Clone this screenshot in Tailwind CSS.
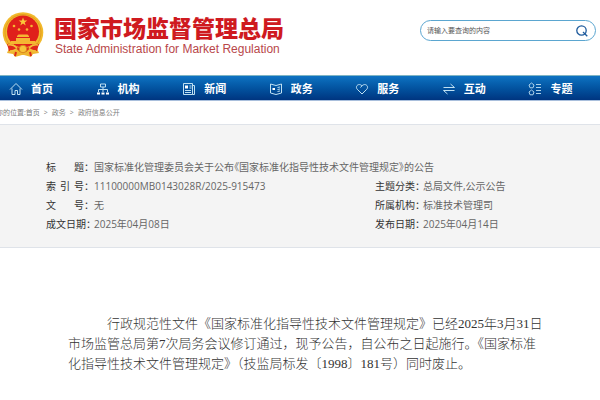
<!doctype html>
<html lang="zh-CN">
<head>
  <meta charset="UTF-8">
  <meta name="viewport" content="width=device-width, initial-scale=1.0">
  <title>国家市场监督管理总局</title>
  <script src="https://cdn.jsdelivr.net/npm/@tailwindcss/browser@4"></script>
</head>
<body class="bg-white overflow-x-hidden font-['Open_Sans','Noto_Sans_CJK_SC',sans-serif]">

<header class="flex items-start justify-between h-[75px] pl-0.5 pr-1">
    <a href="#" class="flex items-start pt-3 gap-2.5">
        <svg class="w-[42px] h-[46px] shrink-0" viewBox="0 0 42 46">
            <path d="M8 34L5 41l6 1 2 3 7-2h2l7 2 2-3 6-1-3-7z" fill="#eeb530"/>
            <circle cx="21" cy="20.500" r="20.300" fill="#f2b92b"/>
            <circle cx="21" cy="20.500" r="18" fill="none" stroke="#e29d22"/>
            <circle cx="21" cy="19.500" r="16" fill="#e0201b"/>
            <path d="M21 5.500l1.100 3h3.200l-2.600 1.900 1 3.100-2.700-1.900-2.700 1.900 1-3.100-2.600-1.900h3.200z" fill="#fbc83a"/>
            <g fill="#f5b632">
                <circle cx="12" cy="14" r="1.300"/><circle cx="29.500" cy="14" r="1.300"/>
                <circle cx="17" cy="17.500" r="1.300"/><circle cx="25" cy="17.500" r="1.300"/>
                <path d="M15 24l1.500-1.500h9L27 24v1H15zM14 26h14v3H14zM9 29h24v3H9z"/>
            </g>
            <path d="M5 32q5-1 10 3l3 1q3-3 6 0l3-1q5-4 10-3l-2 7q-5 0-8-2l-3 3h-6l-3-3q-3 2-8 2z" fill="#e0281b"/>
            <path d="M6 33q5-1 9 3M36 33q-5-1-9 3M8 39q5 0 7-3M34 39q-5 0-7-3" fill="none" stroke="#f3c03a" stroke-width="1.500"/>
            <circle cx="21" cy="37" r="3.800" fill="#f8c43c" stroke="#d9861c"/>
            <path d="M14 40l-1 4M28 40l1 4" stroke="#dc2a1c" stroke-width="2"/>
        </svg>
        <div class="pt-0.5">
            <h1 class="text-[23px] leading-[29px] font-black text-[#cf1a1f] whitespace-nowrap">国家市场监督管理总局</h1>
            <p class="pl-px text-[12px] leading-3 text-[#b8474a] whitespace-nowrap font-['Liberation_Sans',sans-serif]">State Administration for Market Regulation</p>
        </div>
    </a>
    <form class="flex items-center w-[176px] h-[21px] mt-5 pl-1.5 pr-[7px] rounded-full border border-[#5ba6d0]">
        <input type="text" aria-label="搜索" placeholder="请输入要查询的内容" class="flex-1 min-w-0 text-[7px] leading-4 outline-none placeholder:text-[#555]">
        <button type="submit" aria-label="搜索">
            <svg class="size-3" viewBox="0 0 12 12" fill="none" stroke="#1d5a9c" stroke-width="1.300">
                <circle cx="5.500" cy="5.500" r="4.700"/><path d="M7 7l4.300 4.300"/>
            </svg>
        </button>
    </form>
</header>

<nav class="h-[26px] border-y border-t-[#7fb5c4] border-b-[#a9bfdc] bg-linear-to-b from-[#0f73c2] to-[#003580] text-white">
    <ul class="grid grid-cols-7 h-full w-[102.500%] pt-0.5 pl-[9px] text-[11px] font-bold">
        <li><a href="#" class="flex items-center h-full gap-2">
            <svg class="size-3.5" viewBox="0 0 14 14" fill="none" stroke="#bfe0f2"><path d="M1 7.500l6-6 6 6M3 6.500v6h3v-4h2.500v4H11v-6"/></svg>首页</a></li>
        <li><a href="#" class="flex items-center h-full gap-2">
            <svg class="size-3.5" viewBox="0 0 14 14" fill="none" stroke="#bfe0f2"><path d="M4.500 2h5v3h-5zM7 5v5M2.500 10V7.500h9V10"/><path d="M1 11.500h3M5.500 11.500h3M10 11.500h3" stroke="#fff" stroke-width="2"/></svg>机构</a></li>
        <li><a href="#" class="flex items-center h-full gap-2">
            <svg class="size-3.5" viewBox="0 0 14 14" fill="none" stroke="#bfe0f2"><path d="M1.500 1.500h9v11h-9zM10.500 3.500h2v9h-2M3 8.500h6M3 10.500h6M7.500 4h2M7.500 6h2"/><path d="M3 3.500h3v3H3z" fill="#fff" stroke="none"/></svg>新闻</a></li>
        <li><a href="#" class="flex items-center h-full gap-2">
            <svg class="size-3.5" viewBox="0 0 14 14" fill="none" stroke="#bfe0f2"><path d="M1.500 2L7 3.500 12.500 2v9L7 12.500 1.500 11zM8.500 5.500L11 5M8.500 7.500L11 7M8.500 9.500L11 9"/><path d="M3.500 6H6v2H3.500z" fill="#fff" stroke="none"/></svg>政务</a></li>
        <li><a href="#" class="flex items-center h-full gap-2">
            <svg class="size-3.5" viewBox="0 0 14 14" fill="none" stroke="#bfe0f2"><path d="M7 12L2.200 7.200C-.2 4.500 3.500.5 7 3.800c3.500-3.300 7.200.7 4.800 3.400zM7 3.800L5.500 5.500"/></svg>服务</a></li>
        <li><a href="#" class="flex items-center h-full gap-2">
            <svg class="size-3.5" viewBox="0 0 14 14" fill="none" stroke="#bfe0f2"><path d="M1.500 5.500h11L8.500 2M12.500 8.500h-11l4 3.500"/></svg>互动</a></li>
        <li><a href="#" class="flex items-center h-full gap-2">
            <svg class="size-3.5" viewBox="0 0 14 14" fill="none" stroke="#bfe0f2" stroke-width=".9"><path d="M3.500 1l2.500 2-1 2.800H2L1 3zM3.500 8L6 10l-1 2.800H2L1 10zM8 2.500h5M8 5.500h5M8 8.500h5M8 11.500h5"/></svg>专题</a></li>
    </ul>
</nav>

<div class="flex items-center h-[23px] pt-0.5 -ml-1 gap-1 text-[7px] text-[#808080] whitespace-nowrap">
    <span>你的位置:<a href="#" class="text-[#777]">首页</a></span><span>&gt;</span><a href="#">政务</a><span>&gt;</span><a href="#">政府信息公开</a>
</div>

<section class="border-y border-[#dfe3e9] bg-[#f4f4f4] pt-[33px] pb-[13px] pl-[46px] text-[10px] leading-[19px] text-[#666] whitespace-nowrap">
    <dl>
        <div class="flex">
            <dt class="flex justify-between w-12 text-[#333]"><span>标</span><span>题：</span></dt>
            <dd class="[font-feature-settings:'palt']">国家标准化管理委员会关于公布《国家标准化指导性技术文件管理规定》的公告</dd>
        </div>
        <div class="grid grid-cols-[329px_1fr]">
            <div class="flex">
                <dt class="flex justify-between w-12 text-[#333]"><span>索</span><span>引</span><span>号：</span></dt>
                <dd>11100000MB0143028R/2025-915473</dd>
            </div>
            <div class="flex">
                <dt class="w-12 text-[#333]">主题分类：</dt>
                <dd>总局文件,公示公告</dd>
            </div>
            <div class="flex">
                <dt class="flex justify-between w-12 text-[#333]"><span>文</span><span>号：</span></dt>
                <dd>无</dd>
            </div>
            <div class="flex">
                <dt class="w-12 text-[#333]">所属机构：</dt>
                <dd>标准技术管理司</dd>
            </div>
            <div class="flex">
                <dt class="w-12 text-[#333]">成文日期：</dt>
                <dd>2025年04月08日</dd>
            </div>
            <div class="flex">
                <dt class="w-12 text-[#333]">发布日期：</dt>
                <dd>2025年04月14日</dd>
            </div>
        </div>
    </dl>
</section>

<main class="pt-[66px] pl-[68px] pr-14">
    <p class="indent-[39px] text-[13px] leading-5 font-light text-[#333] font-['Liberation_Serif','Noto_Sans_CJK_SC',serif]">行政规范性文件《国家标准化指导性技术文件管理规定》已经2025年3月31日市场监管总局第7次局务会议修订通过，现予公告，自公布之日起施行。《国家标准化指导性技术文件管理规定》（技监局标发〔1998〕181号）同时废止。</p>
</main>

</body>
</html>
